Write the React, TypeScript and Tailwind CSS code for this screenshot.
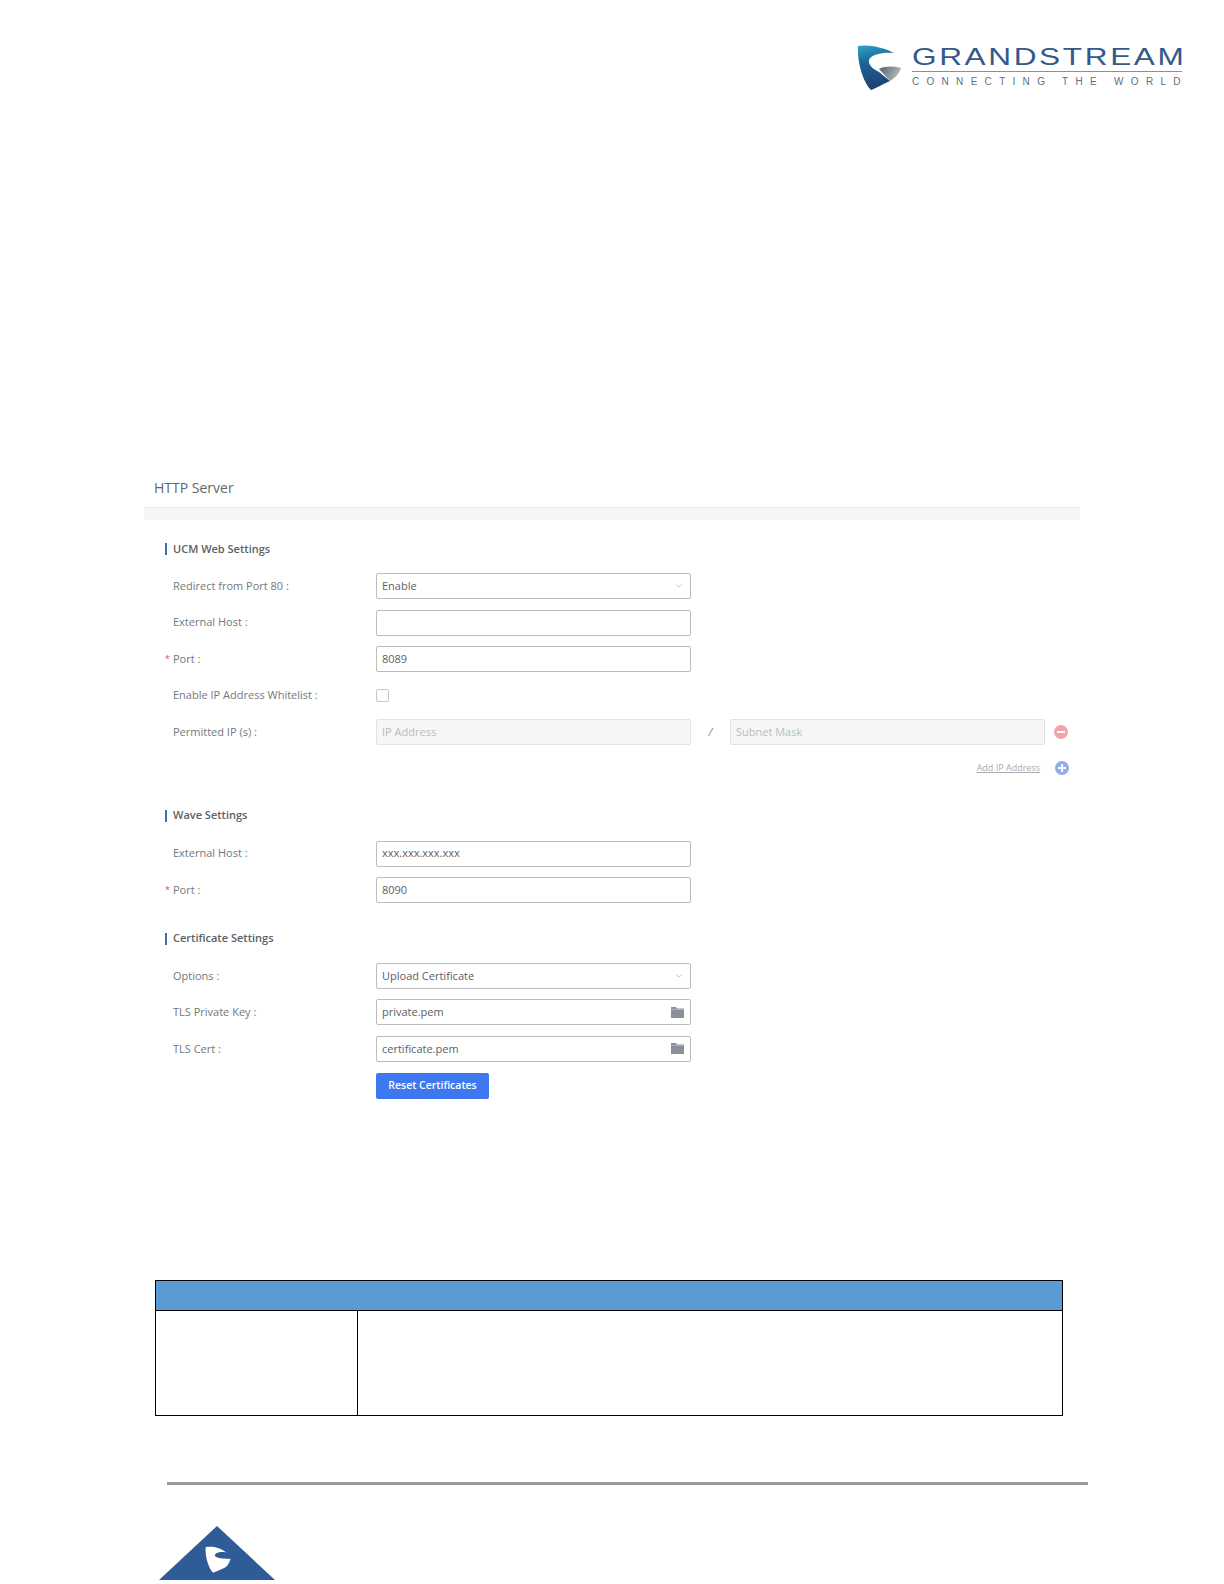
import { ChevronDown } from 'lucide-react';
import type { ReactNode } from 'react';

const font = { fontFamily: '"Open Sans", "Noto Sans", sans-serif' };

function LogoMark() {
  return (
    <svg width="44" height="46" viewBox="0 0 44 46">
      <defs>
        <linearGradient id="body" x1="0.3" y1="0" x2="0.5" y2="1">
          <stop offset="0" stopColor="#2a9cc0" />
          <stop offset="0.35" stopColor="#1f6496" />
          <stop offset="1" stopColor="#1c3f6e" />
        </linearGradient>
        <linearGradient id="wing" x1="0" y1="0" x2="1" y2="0.4">
          <stop offset="0" stopColor="#56606a" />
          <stop offset="1" stopColor="#b4b8bc" />
        </linearGradient>
      </defs>
      <path d="M1 2C12 0 28 4 37 9C27 8 14 10 12 16C11 21 16 25 22 28L33 37C24 41 20 44 14 46C6 38 0 18 1 2Z" fill="url(#body)" />
      <path d="M22 25C28 22 36 22 44 24C42 30 38 34 33 37Z" fill="url(#wing)" />
    </svg>
  );
}

function Heading({ children, className }: { children: ReactNode; className: string }) {
  return (
    <div className={`flex h-[14px] items-center ${className}`}>
      <span className="h-[12px] w-[2px] bg-[#3f6fb5]" />
      <span className="ml-[6px] text-[11px] font-semibold text-[#5c6166]">{children}</span>
    </div>
  );
}

function Row({ label, required, children }: { label: string; required?: boolean; children: ReactNode }) {
  return (
    <div className="flex h-[26px] items-center">
      <span className="w-[8px] text-[9px] text-[#d0574f]">{required ? '*' : ''}</span>
      <span className="w-[203px] text-[11px] text-[#74787c]">{label}</span>
      {children}
    </div>
  );
}

function Field({ value, disabled, icon }: { value?: string; disabled?: boolean; icon?: ReactNode }) {
  return (
    <div
      className={`flex h-[26px] w-[315px] items-center justify-between rounded-[2px] border px-[5px] text-[11px] ${
        disabled ? 'border-[#e2e2e2] bg-[#f6f6f6] text-[#bcbcbc]' : 'border-[#bdbdbd] bg-white text-[#5c6064]'
      }`}
    >
      <span>{value}</span>
      {icon}
    </div>
  );
}

const chevron = <ChevronDown size={10} strokeWidth={1.2} className="mr-[1px] text-[#8a8a8a]" />;

const folder = (
  <svg width="13" height="11" viewBox="0 0 13 11" className="mr-[1px]">
    <path d="M0 0H5L6 1.5H13V11H0Z" fill="#8b8f99" />
    <path d="M0 2.4H13" stroke="#c9ccd2" strokeWidth="0.6" />
  </svg>
);

export default function App() {
  return (
    <div className="flex h-[1584px] w-[1224px] flex-col bg-white" style={font}>
      <div className="flex justify-end pr-[42px] pt-[44px]">
        <LogoMark />
        <div className="ml-[11px] w-[270px]">
          <div
            className="h-[26px] origin-left scale-x-[1.315] whitespace-nowrap pt-[1px] text-[24px] leading-[24px] tracking-[2px] text-[#34598a]"
            style={{ fontFamily: '"Liberation Sans", sans-serif' }}
          >
            GRANDSTREAM
          </div>
          <div className="mt-[1px] h-px bg-[#7d93ad]" />
          <div
            className="mt-[5px] whitespace-nowrap text-[10px] leading-[10px] tracking-[7.3px] text-[#5f6f80]"
            style={{ fontFamily: '"Liberation Sans", sans-serif' }}
          >
            CONNECTING THE WORLD
          </div>
        </div>
      </div>

      <div className="ml-[144px] mt-[388px] w-[936px]">
        <div className="h-[20px] pl-[10px] text-[14px] leading-[20px] text-[#63676b]">HTTP Server</div>
        <div className="mt-[9px] h-[13px] border-t border-[#e3e8ea] bg-[#f2f6f8]" />

        <div className="pl-[21px]">
          <Heading className="mt-[22px]">UCM Web Settings</Heading>
          <div className="mt-[17.2px] flex flex-col gap-[10.4px]">
            <Row label="Redirect from Port 80 :">
              <Field value="Enable" icon={chevron} />
            </Row>
            <Row label="External Host :">
              <Field />
            </Row>
            <Row label="Port :" required>
              <Field value="8089" />
            </Row>
            <Row label="Enable IP Address Whitelist :">
              <span className="h-[13px] w-[13px] rounded-[2px] border border-[#c8c8c8] bg-white" />
            </Row>
            <Row label="Permitted IP (s) :">
              <Field value="IP Address" disabled />
              <span className="w-[39px] text-center text-[11px] italic text-[#888]">/</span>
              <Field value="Subnet Mask" disabled />
              <svg width="14" height="14" viewBox="0 0 14 14" className="ml-[9px]">
                <circle cx="7" cy="7" r="7" fill="#f3a4ab" />
                <rect x="3" y="6" width="8" height="2" fill="#fff" />
              </svg>
            </Row>
          </div>
          <div className="mt-[14.8px] flex h-[16px] items-center justify-end pr-[11px]">
            <span className="text-[9px] text-[#a8acb0] underline">Add IP Address</span>
            <svg width="14" height="14" viewBox="0 0 14 14" className="ml-[15px]">
              <circle cx="7" cy="7" r="7" fill="#8fb0e6" />
              <path d="M3 7H11M7 3V11" stroke="#fff" strokeWidth="2" />
            </svg>
          </div>

          <Heading className="mt-[33px]">Wave Settings</Heading>
          <div className="mt-[18px] flex flex-col gap-[10.4px]">
            <Row label="External Host :">
              <Field value="xxx.xxx.xxx.xxx" />
            </Row>
            <Row label="Port :" required>
              <Field value="8090" />
            </Row>
          </div>

          <Heading className="mt-[28.6px]">Certificate Settings</Heading>
          <div className="mt-[17.5px] flex flex-col gap-[10.4px]">
            <Row label="Options :">
              <Field value="Upload Certificate" icon={chevron} />
            </Row>
            <Row label="TLS Private Key :">
              <Field value="private.pem" icon={folder} />
            </Row>
            <Row label="TLS Cert :">
              <Field value="certificate.pem" icon={folder} />
            </Row>
          </div>
          <button
            type="button"
            className="ml-[211px] mt-[10.7px] block h-[26px] w-[113px] rounded-[2px] bg-[#3d78f0] text-[10.5px] font-semibold text-white"
          >
            Reset Certificates
          </button>
        </div>
      </div>

      <table className="ml-[155px] mt-[181px] h-[136px] w-[908px] border-collapse border-[1.5px] border-black">
        <tbody>
          <tr className="h-[30px]">
            <td colSpan={2} className="border-[1.5px] border-black bg-[#5b9bd5]" />
          </tr>
          <tr>
            <td className="w-[202px] border-[1.5px] border-black" />
            <td className="border-[1.5px] border-black" />
          </tr>
        </tbody>
      </table>

      <div className="ml-[167px] mt-[66px] h-[3px] w-[921px] bg-[#9a9a9a]" />

      <svg width="116" height="54" viewBox="0 0 116 54" className="ml-[159px] mt-[41px]">
        <polygon points="58,0 116,54 0,54" fill="#2f5b96" />
        <g transform="translate(46 20) scale(0.58)">
          <path d="M1 2C12 0 28 3 36 11C28 9 18 11 17 16C17 20 24 22 44 22C42 30 38 36 33 38C24 42 20 44 14 46C6 38 0 18 1 2Z" fill="#fff" />
        </g>
      </svg>
    </div>
  );
}
